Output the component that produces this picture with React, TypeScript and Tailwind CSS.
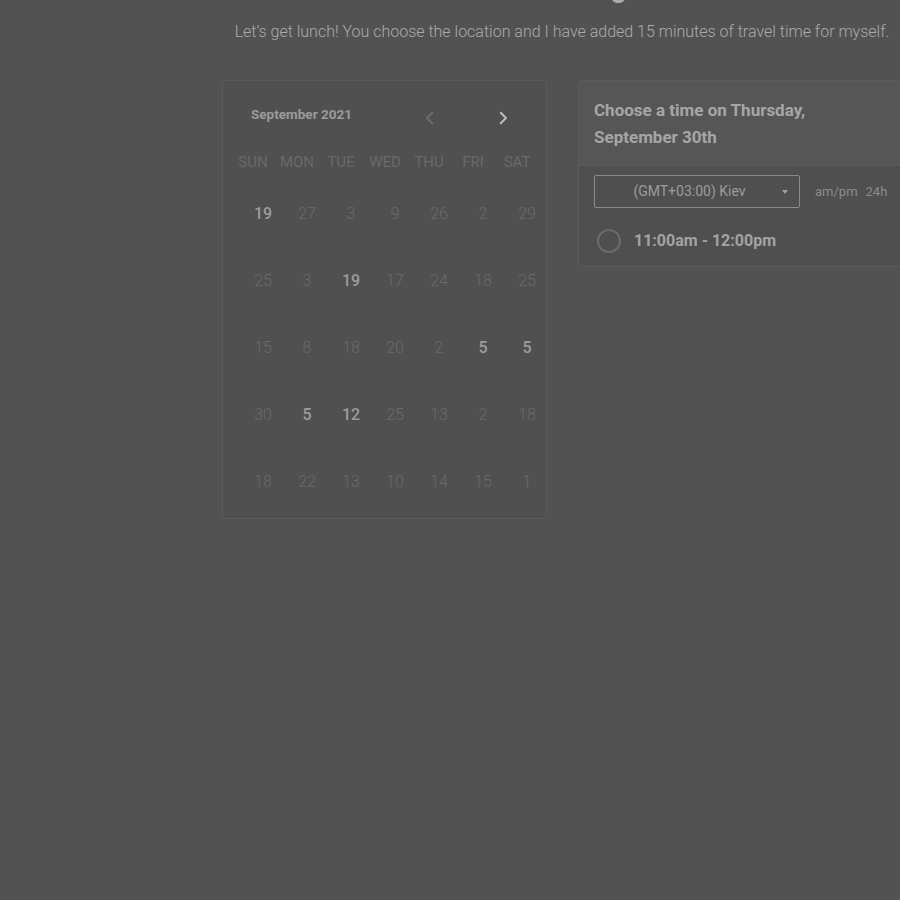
import React from "react";

const days = ["SUN", "MON", "TUE", "WED", "THU", "FRI", "SAT"];

// [value, highlighted]
const weeks: [string, boolean][][] = [
  [["19", true], ["27", false], ["3", false], ["9", false], ["26", false], ["2", false], ["29", false]],
  [["25", false], ["3", false], ["19", true], ["17", false], ["24", false], ["18", false], ["25", false]],
  [["15", false], ["8", false], ["18", false], ["20", false], ["2", false], ["5", true], ["5", true]],
  [["30", false], ["5", true], ["12", true], ["25", false], ["13", false], ["2", false], ["18", false]],
  [["18", false], ["22", false], ["13", false], ["10", false], ["14", false], ["15", false], ["1", false]],
];

const Chevron = ({ dir, className }: { dir: "left" | "right"; className: string }) => (
  <svg viewBox="0 0 24 24" className={className} fill="none" stroke="currentColor" strokeWidth={2.6} strokeLinecap="round" strokeLinejoin="round">
    {dir === "left" ? <path d="M15 5l-7 7 7 7" /> : <path d="M9 5l7 7-7 7" />}
  </svg>
);

const Calendar = () => {
  return (
    <div className="w-[325px] h-[439px] shrink-0 rounded-[4px] border border-[#5b5b5b] bg-[#505050]">
      <div className="flex items-center h-[20px] mt-[23px] pl-[28px] pr-[33px]">
        <span className="flex-1 text-[13.5px] font-bold text-[#9b9b9b]">September 2021</span>
        <button className="w-[20px] h-[20px] flex items-center justify-center translate-y-[4px] text-[#6c6c6c]">
          <Chevron dir="left" className="w-[18px] h-[18px]" />
        </button>
        <button className="w-[20px] h-[20px] ml-[53px] flex items-center justify-center translate-y-[4px] text-[#bdbdbd]">
          <Chevron dir="right" className="w-[18px] h-[18px]" />
        </button>
      </div>
      <div className="grid grid-cols-7 w-[308px] ml-[8px] mt-[28px] h-[20px] items-center">
        {days.map((d) => (
          <span key={d} className="text-center text-[15px] leading-[20px] text-[#696969]">
            {d}
          </span>
        ))}
      </div>
      <div className="mt-[8px] ml-[18px] w-[308px]">
        {weeks.map((w, i) => (
          <div key={i} className="grid grid-cols-7 h-[67px] items-center">
            {w.map(([n, hi], j) => (
              <span
                key={j}
                className={
                  hi
                    ? "text-center text-[16px] font-medium text-[#9c9c9c]"
                    : "text-center text-[16px] font-light text-[#6a6a6a]"
                }
              >
                {n}
              </span>
            ))}
          </div>
        ))}
      </div>
    </div>
  );
};

const TimePanel = () => {
  return (
    <div className="w-[360px] shrink-0 rounded-[4px] border border-[#5b5b5b] bg-[#4f4f4f]">
      <div className="h-[85px] bg-[#565656] border-b border-[#5b5b5b] pl-[15px] pt-[16px]">
        <p className="text-[17px] leading-[27px] font-bold text-[#a6a6a6]">
          Choose a time on Thursday,
          <br />
          September 30th
        </p>
      </div>
      <div className="pl-[15px] pt-[9px] pb-[13px]">
        <div className="flex items-center">
          <div className="w-[206px] h-[33px] flex items-center rounded-[2px] border border-[#8a8a8a]">
            <span className="flex-1 text-center pl-[2px] text-[14px] text-[#9c9c9c]">(GMT+03:00) Kiev</span>
            <span className="w-0 h-0 mr-[11px] border-l-[3.5px] border-r-[3.5px] border-t-[4px] border-l-transparent border-r-transparent border-t-[#a0a0a0]" />
          </div>
          <span className="ml-[15px] text-[13px] text-[#8c8c8c]">am/pm</span>
          <span className="ml-[8px] text-[13px] text-[#8c8c8c]">24h</span>
        </div>
        <div className="flex items-center mt-[21px] h-[24px]">
          <span className="w-[24px] h-[24px] ml-[3px] rounded-full border-2 border-[#6b6b6b]" />
          <span className="ml-[13px] text-[16px] font-bold text-[#a3a3a3]">11:00am - 12:00pm</span>
        </div>
      </div>
    </div>
  );
};

export default function App() {
  return (
    <div className="min-h-screen w-full overflow-hidden bg-[#525252]" style={{ fontFamily: "Roboto, 'Noto Sans', sans-serif" }}>
      <div className="ml-[222px] w-[680px]">
        <h1 className="-mt-[30px] h-[36px] pl-[26px] text-center text-[28px] leading-[36px] font-bold text-[#adadad]">
          Meeting
        </h1>
        <p className="mt-[14px] text-center whitespace-nowrap text-[16px] font-light text-[#ababab]">
          Let’s get lunch! You choose the location and I have added 15 minutes of travel time for myself.
        </p>
        <div className="flex items-start gap-[31px] mt-[36px]">
          <Calendar />
          <TimePanel />
        </div>
      </div>
    </div>
  );
}
